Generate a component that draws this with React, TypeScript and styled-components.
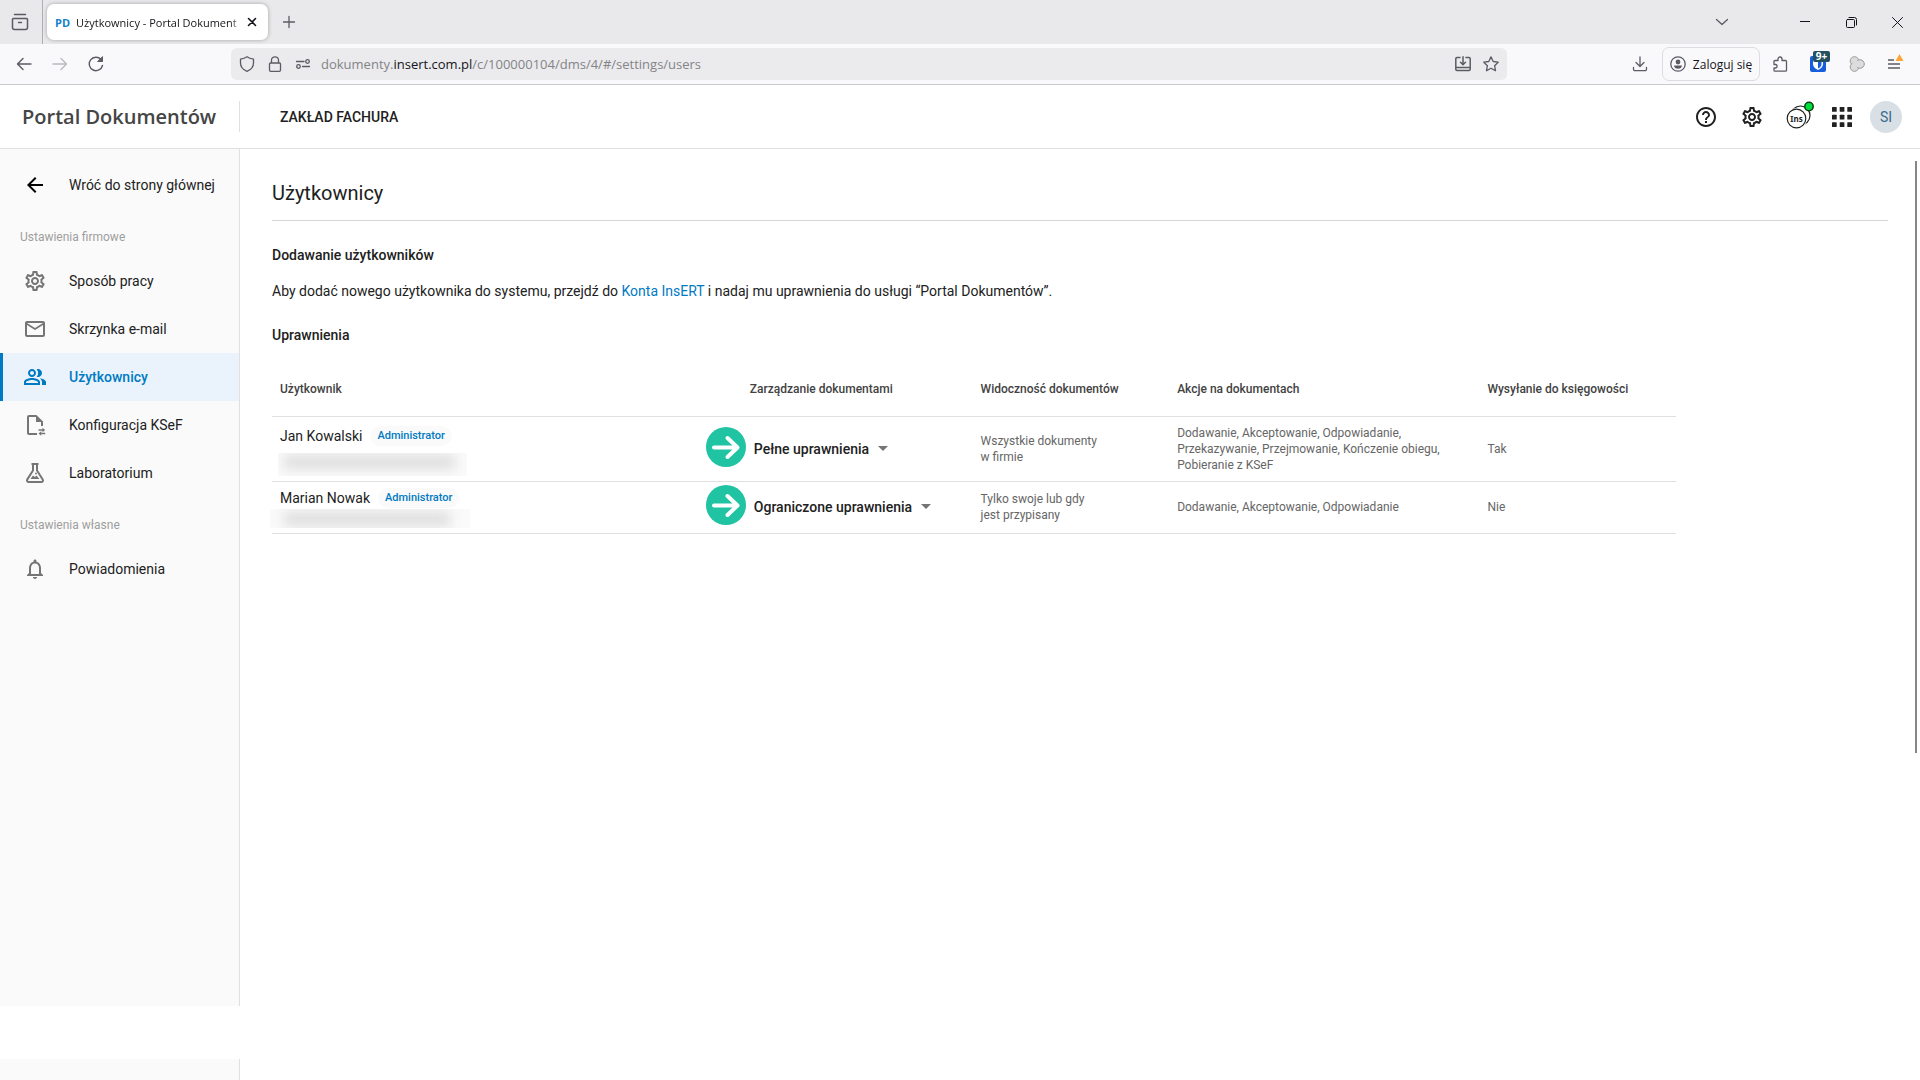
import React from "react";
import styled, { createGlobalStyle, css } from "styled-components";
import {
  MdArrowBack,
  MdHelpOutline,
  MdMailOutline,
  MdNotificationsNone,
  MdOutlinePeopleAlt,
  MdOutlineSettings,
} from "react-icons/md";

const appFont = `Roboto, "Noto Sans", sans-serif`;
const chromeFont = `"Open Sans", "Noto Sans", sans-serif`;
const blue = "#007ac3";
const line = "#e0e0e0";

const GlobalStyle = createGlobalStyle`
  *, *::before, *::after { box-sizing: border-box; }
  body { margin: 0; background: #fff; color: #212121; font-family: ${appFont}; font-size: 14px; }
  button { border: 0; padding: 0; background: none; color: inherit; font: inherit; cursor: pointer; }
  h1, h2, p { margin: 0; padding: 0; }
  svg { display: block; flex: none; }
`;

const Page = styled.div`
  display: flex;
  flex-direction: column;
  min-height: 100vh;
`;

/* Browser window */

const TabStrip = styled.div`
  display: flex;
  align-items: center;
  height: 44px;
  background: #e9e9eb;
  color: #5b5b66;
  font-family: ${chromeFont};
`;

const IconButton = styled.button<{ $w: number }>`
  display: flex;
  align-items: center;
  justify-content: center;
  flex: none;
  width: ${(p) => p.$w}px;
  height: 32px;
`;

const StripDivider = styled.div`
  align-self: stretch;
  width: 1px;
  margin-left: 2px;
  background: #aeaeb3;
`;

const Tab = styled.div`
  display: flex;
  align-items: center;
  width: 221px;
  height: 36px;
  margin-left: 4px;
  padding: 0 8px;
  border-radius: 7px;
  background: #fff;
  box-shadow: 0 0 4px rgba(0, 0, 0, 0.3);
`;

const Favicon = styled.span`
  margin-right: 6px;
  color: #1182c8;
  font: 700 11px ${chromeFont};
`;

const TabTitle = styled.span`
  flex: 1;
  min-width: 0;
  overflow: hidden;
  white-space: nowrap;
  color: #15141a;
  font-size: 11px;
  mask-image: linear-gradient(to right, #000 92%, transparent);
`;

const Spacer = styled.div`
  flex: 1;
`;

const WindowButtons = styled.div`
  display: flex;
  margin-left: 41px;
  color: #15141a;
`;

const Toolbar = styled.div`
  display: flex;
  align-items: center;
  height: 41px;
  padding: 0 6px;
  border-bottom: 1px solid #c8c8cd;
  background: #f9f9fb;
  color: #5b5b66;
  font-family: ${chromeFont};
`;

const AddressBar = styled.div`
  display: flex;
  align-items: center;
  flex: 1;
  height: 32px;
  margin: 0 115px 0 117px;
  padding: 0 2px;
  border-radius: 6px;
  background: #ebebed;
`;

const Address = styled.div`
  flex: 1;
  padding-left: 4px;
  color: #838388;
  font-size: 13px;
  white-space: nowrap;
  b {
    color: #15141a;
    font-weight: 400;
  }
`;

const LoginButton = styled.button`
  display: flex;
  align-items: center;
  justify-content: center;
  gap: 7px;
  width: 98px;
  height: 34px;
  margin: 0 2px 0 4px;
  border: 1px solid #dddde1;
  border-radius: 7px;
  color: #15141a;
  font-size: 12px;
  white-space: nowrap;
`;

const ExtensionButton = styled(IconButton)`
  position: relative;
`;

const CountBadge = styled.span`
  position: absolute;
  top: 3px;
  right: 8px;
  width: 17px;
  border-radius: 2px;
  background: #24505f;
  color: #fff;
  font: 700 10px/11px ${chromeFont};
`;

/* Application header */

const Header = styled.header`
  display: flex;
  align-items: center;
  height: 64px;
  padding-right: 18px;
  border-bottom: 1px solid ${line};
`;

const Brand = styled.div`
  display: flex;
  align-items: center;
  width: 240px;
  height: 31px;
  padding-left: 22px;
  border-right: 1px solid ${line};
  color: #454545;
  font: 600 20px/31px "Open Sans", "Noto Sans", sans-serif;
  white-space: nowrap;
`;

const Company = styled.div`
  flex: 1;
  padding-left: 40px;
  font-weight: 500;
  font-size: 14px;
`;

const Avatar = styled.button`
  width: 32px;
  height: 32px;
  margin-left: 6px;
  border-radius: 50%;
  background: #d8e0e6;
  color: #396b8c;
  font-size: 14px;
`;

/* Sidebar */

const Body = styled.div`
  display: flex;
  flex: 1;
`;

const Sidebar = styled.div`
  display: flex;
  flex-direction: column;
  gap: 53px;
  flex: none;
  width: 240px;
`;

const SidePanel = styled.nav`
  flex: 1;
  padding-top: 12px;
  border-right: 1px solid ${line};
  background: #fafafa;
`;

const SideFoot = styled.div`
  height: 21px;
  border-right: 1px solid ${line};
  background: #fafafa;
`;

const NavItem = styled.a<{ $active?: boolean; $back?: boolean }>`
  display: flex;
  align-items: center;
  gap: 22px;
  height: 48px;
  padding-left: 20px;
  border-left: 3px solid transparent;
  color: #212121;
  font-size: 14px;
  text-decoration: none;
  white-space: nowrap;
  svg {
    color: ${(p) => (p.$back ? "#000" : "#757575")};
  }
  ${(p) =>
    p.$active &&
    css`
      border-color: ${blue};
      background: #eaf3fb;
      font-weight: 500;
      color: ${blue};
      svg {
        color: ${blue};
      }
    `}
`;

const NavHeading = styled.h2`
  height: 48px;
  padding: 8px 0 0 20px;
  color: #9e9e9e;
  font-weight: 400;
  font-size: 12px;
  line-height: 40px;
`;

/* Content */

const Main = styled.main`
  flex: 1;
  min-width: 0;
  padding: 24px 27px 24px 32px;
`;

const Title = styled.h1`
  height: 48px;
  border-bottom: 1px solid #d6d6d6;
  font-weight: 400;
  font-size: 20px;
  line-height: 40px;
`;

const SubTitle = styled.h2`
  padding-top: 24px;
  font-weight: 500;
  font-size: 14px;
  line-height: 20px;
`;

const Lead = styled.p`
  padding-top: 16px;
  line-height: 20px;
`;

const TextLink = styled.a`
  color: ${blue};
  text-decoration: none;
`;

const Table = styled.table`
  width: 100%;
  max-width: 1404px;
  margin-top: 16px;
  border-collapse: collapse;
  table-layout: fixed;
  color: #666;
  font-size: 12px;
  line-height: 16px;
`;

const Column = styled.col<{ $share: number }>`
  width: ${(p) => p.$share}%;
`;

const HeadCell = styled.th<{ $indent?: boolean }>`
  height: 55px;
  padding: 2px 8px 0 ${(p) => (p.$indent ? 44 : 8)}px;
  border-bottom: 1px solid ${line};
  color: #424242;
  font-weight: 500;
  text-align: left;
  white-space: nowrap;
`;

const Row = styled.tr<{ $tall?: boolean }>`
  height: ${(p) => (p.$tall ? 65 : 52)}px;
`;

const Cell = styled.td<{ $flush?: boolean }>`
  padding: 0 8px 0 ${(p) => (p.$flush ? 0 : 8)}px;
  border-bottom: 1px solid ${line};
  vertical-align: middle;
`;

const UserCell = styled.div<{ $roomy: boolean }>`
  display: grid;
  gap: ${(p) => (p.$roomy ? 7 : 1)}px;
  padding-top: ${(p) => (p.$roomy ? 4 : 2)}px;
`;

const UserName = styled.div`
  display: flex;
  align-items: center;
  gap: 8px;
  height: 20px;
  color: #212121;
  font-size: 14px;
`;

const RoleBadge = styled.span`
  padding: 0 7px;
  border-radius: 10px;
  background: #fafafa;
  color: ${blue};
  font-weight: 500;
  font-size: 11px;
  line-height: 20px;
`;

const HiddenEmail = styled.div<{ $roomy: boolean }>`
  display: flex;
  align-items: center;
  width: ${(p) => (p.$roomy ? 189 : 200)}px;
  height: ${(p) => (p.$roomy ? 23 : 19)}px;
  margin-left: ${(p) => (p.$roomy ? -2 : -10)}px;
  padding: ${(p) => (p.$roomy ? "0 12px 4px 6px" : "0 20px 0 14px")};
  overflow: hidden;
  background: #fafafa;
  &::before {
    content: "";
    flex: 1;
    height: 14px;
    background: #dedede;
    filter: blur(6px);
  }
`;

const Permission = styled.div`
  display: flex;
  align-items: center;
  gap: 8px;
  svg:first-child {
    margin-bottom: 4px;
  }
`;

const PermissionSelect = styled.select`
  field-sizing: content;
  appearance: none;
  padding: 0;
  border: 0;
  background: none;
  color: #212121;
  font: 500 14px/20px ${appFont};
`;

const ScrollThumb = styled.div`
  width: 2px;
  height: 592px;
  margin: 12px 3px 0 0;
  background: #868686;
`;

/* Drawings */

type IcoProps = { children: React.ReactNode; s?: number; w?: number };
const Ico = ({ children, s = 16, w = 1.3 }: IcoProps) => (
  <svg width={s} height={s} viewBox={`0 0 ${s} ${s}`} fill="none" stroke="currentColor" strokeWidth={w} strokeLinecap="round" strokeLinejoin="round" aria-hidden="true">
    {children}
  </svg>
);

const DocSyncIcon = () => (
  <svg width="24" height="24" viewBox="0 0 24 24" fill="currentColor" aria-hidden="true">
    <path d="M13.4 2H6a2 2 0 0 0-2 2v16c0 1.100.9 2 2 2h8v-2H6V4h7v5h5v4h2V8.600z" />
    <path d="M15.500 16.200h4V14.700l2.700 2.300-2.700 2.300v-1.500h-4zM22.200 19.700h-4v-1.500l-2.700 2.300 2.700 2.300v-1.500h4z" />
  </svg>
);

const FlaskIcon = () => (
  <svg width="24" height="24" viewBox="0 0 24 24" fill="none" stroke="currentColor" strokeWidth="2" strokeLinejoin="round" aria-hidden="true">
    <path d="M8.500 3h7M10 3v6.500L4.300 18.400c-.8 1.300 0 2.600 1.500 2.600h12.400c1.500 0 2.300-1.300 1.500-2.600L14 9.500V3" />
    <path d="M7.500 18l2.500-3.500 2 1.500 1.500-1.500 3 3.500z" fill="currentColor" stroke="none" />
    <circle cx="13" cy="12.500" r=".9" fill="currentColor" stroke="none" />
  </svg>
);

const CommunityIcon = () => (
  <svg width="32" height="30" viewBox="0 0 32 30" overflow="visible" fill="none" stroke="#212121" strokeWidth="1.200" aria-hidden="true">
    <circle cx="19.500" cy="13.500" r="9.500" />
    <circle cx="15.500" cy="16.500" r="10.500" fill="#fff" stroke="none" />
    <circle cx="15.500" cy="16.500" r="9.300" />
    <text x="15.500" y="19.500" fill="#212121" stroke="none" textAnchor="middle" fontFamily="Noto Sans" fontWeight="700" fontSize="8">Ins</text>
    <circle cx="28" cy="4.500" r="4.200" fill="#00e03c" stroke="#0b3d14" strokeWidth="1.500" />
  </svg>
);

const AppsIcon = () => (
  <svg width="20" height="20" viewBox="0 0 20 20" fill="#212121" aria-hidden="true">
    {[0, 7.7, 15.3].map((y) => [0, 7.7, 15.3].map((x) => <rect key={`${x}-${y}`} x={x} y={y} width="4.700" height="4.700" rx=".5" />))}
  </svg>
);

const GoArrow = () => (
  <svg width="40" height="40" viewBox="0 0 40 40" aria-hidden="true">
    <circle cx="20" cy="20" r="20" fill="#20c3a2" />
    <path d="M8 20.500h23M21.500 11l10 9.500-10 9.500" fill="none" stroke="#fff" strokeWidth="4" strokeLinecap="round" strokeLinejoin="round" />
  </svg>
);

const Caret = () => (
  <svg width="12" height="6" viewBox="0 0 12 6" fill="#757575" aria-hidden="true">
    <path d="M1 0h10L6 5z" />
  </svg>
);

/* Data */

const companyLinks = [
  { label: "Sposób pracy", icon: <MdOutlineSettings size={24} /> },
  { label: "Skrzynka e-mail", icon: <MdMailOutline size={24} /> },
  { label: "Użytkownicy", icon: <MdOutlinePeopleAlt size={24} />, active: true },
  { label: "Konfiguracja KSeF", icon: <DocSyncIcon /> },
  { label: "Laboratorium", icon: <FlaskIcon /> },
];

const users = [
  {
    name: "Jan Kowalski",
    permission: "Pełne uprawnienia",
    visibility: ["Wszystkie dokumenty", "w firmie"],
    actions: ["Dodawanie, Akceptowanie, Odpowiadanie,", "Przekazywanie, Przejmowanie, Kończenie obiegu,", "Pobieranie z KSeF"],
    sending: "Tak",
    tall: true,
  },
  {
    name: "Marian Nowak",
    permission: "Ograniczone uprawnienia",
    visibility: ["Tylko swoje lub gdy", "jest przypisany"],
    actions: ["Dodawanie, Akceptowanie, Odpowiadanie"],
    sending: "Nie",
    tall: false,
  },
];

const Lines = ({ items }: { items: string[] }) => (
  <>
    {items.map((t) => (
      <div key={t}>{t}</div>
    ))}
  </>
);

const BrowserChrome = () => (
  <>
    <TabStrip>
      <IconButton $w={40} aria-label="Widok kart">
        <Ico s={18} w={1.5}><path d="M3.500 1.500h11M2.500 5.500h13a1 1 0 0 1 1 1v8a2 2 0 0 1-2 2h-11a2 2 0 0 1-2-2v-8a1 1 0 0 1 1-1zM7.500 9.500h3" /></Ico>
      </IconButton>
      <StripDivider />
      <Tab>
        <Favicon>PD</Favicon>
        <TabTitle>Użytkownicy - Portal Dokument</TabTitle>
        <IconButton $w={16} aria-label="Zamknij kartę">
          <Ico s={10} w={1.6}><path d="M1.500 1.500l7 7M8.500 1.500l-7 7" stroke="#15141a" /></Ico>
        </IconButton>
      </Tab>
      <IconButton $w={42} aria-label="Nowa karta">
        <Ico s={14}><path d="M7 1.500v11M1.500 7h11" /></Ico>
      </IconButton>
      <Spacer />
      <IconButton $w={38} aria-label="Lista kart">
        <Ico s={14}><path d="M1.500 4.500L7 9.500l5.500-5" /></Ico>
      </IconButton>
      <WindowButtons>
        <IconButton $w={46} aria-label="Minimalizuj"><Ico s={10} w={1}><path d="M0 4.500h10" /></Ico></IconButton>
        <IconButton $w={46} aria-label="Przywróć"><Ico s={11} w={1}><path d="M1.500 2.500h6a1 1 0 0 1 1 1v6a1 1 0 0 1-1 1h-6a1 1 0 0 1-1-1v-6a1 1 0 0 1 1-1zM3 .5h5.500a2 2 0 0 1 2 2V8" /></Ico></IconButton>
        <IconButton $w={46} aria-label="Zamknij"><Ico s={11} w={1}><path d="M.5.5l10 10M10.500.5l-10 10" /></Ico></IconButton>
      </WindowButtons>
    </TabStrip>
    <Toolbar>
      <IconButton $w={36} aria-label="Wstecz"><Ico w={1.4}><path d="M15 8H1.500M7 2.500L1.500 8 7 13.500" /></Ico></IconButton>
      <IconButton $w={36} aria-label="Dalej"><Ico w={1.4}><path d="M1 8h13.500M9 2.500L14.500 8 9 13.500" stroke="#b9b9bf" /></Ico></IconButton>
      <IconButton $w={36} aria-label="Odśwież"><Ico w={1.4}><path d="M14.500 9.500A6.700 6.700 0 1 1 13 3.500" /><path d="M14.500 1v4.500H10z" fill="currentColor" strokeWidth="1" /></Ico></IconButton>
      <AddressBar>
        <IconButton $w={28} aria-label="Ochrona"><Ico><path d="M8 .8c2 1.500 4 2 6.500 2.300V7c0 4-2.500 6.700-6.500 8.300C4 13.700 1.500 11 1.500 7V3.100C4 2.800 6 2.300 8 .8z" /></Ico></IconButton>
        <IconButton $w={28} aria-label="Połączenie"><Ico><path d="M3.500 7h9a1 1 0 0 1 1 1v6a1.300 1.300 0 0 1-1.300 1.300H3.800A1.300 1.300 0 0 1 2.500 14V8a1 1 0 0 1 1-1zM4.500 7V4.300a3.500 3.500 0 0 1 7 0V7" /></Ico></IconButton>
        <IconButton $w={28} aria-label="Uprawnienia witryny"><Ico><path d="M1.500 5.500H9M7.500 10.500h7" /><circle cx="12.500" cy="5.500" r="1.800" /><circle cx="3.500" cy="10.500" r="1.800" /></Ico></IconButton>
        <Address role="textbox" aria-label="Adres" tabIndex={0}>dokumenty.<b>insert.com.pl</b>/c/100000104/dms/4/#/settings/users</Address>
        <IconButton $w={28} aria-label="Zainstaluj"><Ico w={1.5}><path d="M5 1.500H2a1.200 1.200 0 0 0-1.200 1.200v10.600c0 .8.500 1.200 1.200 1.200h12c.7 0 1.200-.4 1.200-1.200V2.700c0-.7-.5-1.200-1.200-1.200h-3M8 .8V8.500M5.500 6.300L8 8.800l2.500-2.500M1 11.500h14" /></Ico></IconButton>
        <IconButton $w={28} aria-label="Zakładka"><Ico><path d="M8 .9l2.200 4.600 5 .7-3.600 3.500.9 5L8 12.300l-4.500 2.400.9-5L.8 6.200l5-.7z" /></Ico></IconButton>
      </AddressBar>
      <IconButton $w={36} aria-label="Pobrane"><Ico><path d="M8 1v9M4 6.500L8 10.500l4-4M1.500 11.500v1.700a1.500 1.500 0 0 0 1.500 1.500h10a1.500 1.500 0 0 0 1.500-1.500v-1.700" /></Ico></IconButton>
      <LoginButton>
        <Ico><circle cx="8" cy="8" r="7.200" stroke="#5b5b66" /><circle cx="8" cy="6" r="2.400" fill="#5b5b66" stroke="none" /><path d="M4 9.500h8c0 2-1.800 3.300-4 3.300S4 11.500 4 9.500z" fill="#5b5b66" stroke="none" /></Ico>
        Zaloguj się
      </LoginButton>
      <IconButton $w={36} aria-label="Rozszerzenia"><Ico><path d="M2 8.500V5.500a1 1 0 0 1 1-1h3V3a2 2 0 0 1 4 0v1.500h3.500a1 1 0 0 1 1 1v8.700a1 1 0 0 1-1 1H3a1 1 0 0 1-1-1V12h1.700a1.800 1.800 0 0 0 0-3.500z" /></Ico></IconButton>
      <ExtensionButton $w={40} aria-label="Bitwarden">
        <svg width="16" height="16" viewBox="0 0 16 16" aria-hidden="true"><rect width="16" height="16" rx="2" fill="#175ddc" /><path d="M3 2h10v6c0 3-2.500 5-5 6-2.500-1-5-3-5-6z" fill="#fff" /><path d="M8 3.500h3.500V8c0 2-1.500 3.500-3.500 4.500z" fill="#175ddc" /></svg>
        <CountBadge>9+</CountBadge>
      </ExtensionButton>
      <IconButton $w={38} aria-label="Dodatek">
        <svg width="16" height="16" viewBox="0 0 16 16" fill="#dcdcdc" stroke="#9a9a9a" aria-hidden="true"><circle cx="5.500" cy="5" r="4.300" /><circle cx="5.500" cy="11" r="4.300" /><circle cx="11" cy="8" r="4.300" /><circle cx="7" cy="8" r="3.600" stroke="none" /></svg>
      </IconButton>
      <IconButton $w={38} aria-label="Menu">
        <svg width="18" height="20" viewBox="0 0 18 20" fill="none" stroke="#5b5b66" strokeWidth="1.300" aria-hidden="true"><path d="M2 6h6M2 10h12M2 14h12" /><path d="M13.500 0L17.500 7h-8z" fill="#ffa436" stroke="none" /></svg>
      </IconButton>
    </Toolbar>
  </>
);

export default function App() {
  return (
    <Page>
      <GlobalStyle />
      <BrowserChrome />
      <Header>
        <Brand>Portal Dokumentów</Brand>
        <Company>ZAKŁAD FACHURA</Company>
        <IconButton $w={46} aria-label="Pomoc"><MdHelpOutline size={24} /></IconButton>
        <IconButton $w={45} aria-label="Ustawienia"><MdOutlineSettings size={24} /></IconButton>
        <IconButton $w={45} aria-label="Społeczność InsERT"><CommunityIcon /></IconButton>
        <IconButton $w={45} aria-label="Aplikacje"><AppsIcon /></IconButton>
        <Avatar>SI</Avatar>
      </Header>
      <Body>
        <Sidebar>
          <SidePanel>
            <NavItem href="#/" $back><MdArrowBack size={24} />Wróć do strony głównej</NavItem>
            <NavHeading>Ustawienia firmowe</NavHeading>
            {companyLinks.map((l) => (
              <NavItem key={l.label} href="#/settings" $active={l.active}>{l.icon}{l.label}</NavItem>
            ))}
            <NavHeading>Ustawienia własne</NavHeading>
            <NavItem href="#/settings"><MdNotificationsNone size={24} />Powiadomienia</NavItem>
          </SidePanel>
          <SideFoot />
        </Sidebar>
        <Main>
          <Title>Użytkownicy</Title>
          <SubTitle>Dodawanie użytkowników</SubTitle>
          <Lead>
            Aby dodać nowego użytkownika do systemu, przejdź do <TextLink href="#/konta">Konta InsERT</TextLink> i nadaj mu uprawnienia do usługi “Portal Dokumentów”.
          </Lead>
          <SubTitle>Uprawnienia</SubTitle>
          <Table>
            <colgroup>
              <Column $share={30.9} />
              <Column $share={19} />
              <Column $share={14} />
              <Column $share={22.1} />
              <Column $share={14} />
            </colgroup>
            <thead>
              <tr>
                <HeadCell>Użytkownik</HeadCell>
                <HeadCell $indent>Zarządzanie dokumentami</HeadCell>
                <HeadCell>Widoczność dokumentów</HeadCell>
                <HeadCell>Akcje na dokumentach</HeadCell>
                <HeadCell>Wysyłanie do księgowości</HeadCell>
              </tr>
            </thead>
            <tbody>
              {users.map((u) => (
                <Row key={u.name} $tall={u.tall}>
                  <Cell>
                    <UserCell $roomy={u.tall}>
                      <UserName>{u.name}<RoleBadge>Administrator</RoleBadge></UserName>
                      <HiddenEmail $roomy={u.tall} />
                    </UserCell>
                  </Cell>
                  <Cell $flush>
                    <Permission>
                      <GoArrow />
                      <PermissionSelect aria-label={`Uprawnienia: ${u.name}`} defaultValue={u.permission}>
                        <option>Pełne uprawnienia</option>
                        <option>Ograniczone uprawnienia</option>
                      </PermissionSelect>
                      <Caret />
                    </Permission>
                  </Cell>
                  <Cell><Lines items={u.visibility} /></Cell>
                  <Cell><Lines items={u.actions} /></Cell>
                  <Cell>{u.sending}</Cell>
                </Row>
              ))}
            </tbody>
          </Table>
        </Main>
        <ScrollThumb />
      </Body>
    </Page>
  );
}
